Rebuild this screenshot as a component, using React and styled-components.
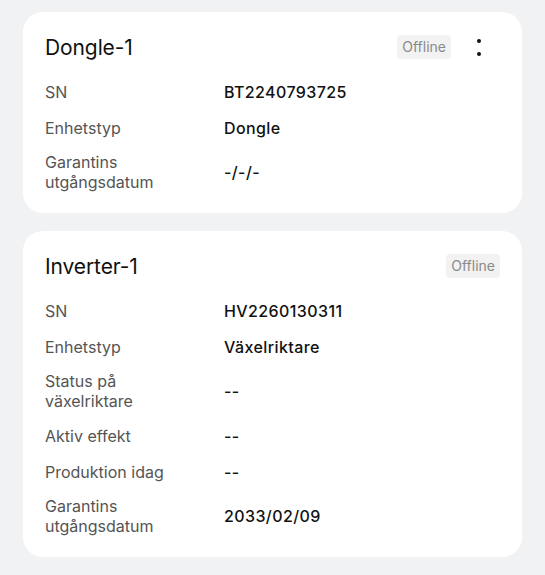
import React from "react";
import styled, { createGlobalStyle } from "styled-components";

const GlobalStyle = createGlobalStyle`
  body {
    margin: 0;
    background: #f1f2f4;
    font-family: Inter, "Noto Sans", sans-serif;
    -webkit-font-smoothing: antialiased;
  }
`;

// kolumn med kort
const Page = styled.div`
  display: flex;
  flex-direction: column;
  gap: 18px;
  padding: 12px 23px 19px 23px;
`;

const Card = styled.div`
  background: #fff;
  border-radius: 20px;
  padding: 22px 22px 21px 22px;
`;

const CardHeader = styled.div`
  display: flex;
  align-items: center;
  height: 26px;
  margin-bottom: 20px;
`;

const Title = styled.h2`
  flex: 1;
  margin: 0;
  font-size: 21px;
  font-weight: 400;
  color: #111;
  letter-spacing: -0.1px;
`;

const Badge = styled.span`
  background: #f2f2f2;
  color: #8a8a8a;
  font-size: 14px;
  line-height: 24px;
  padding: 0 5px;
  border-radius: 4px;
`;

const MoreButton = styled.button`
  border: 0;
  background: none;
  padding: 0;
  margin-left: 20px;
  margin-right: 13px;
  width: 16px;
  height: 26px;
  display: flex;
  align-items: center;
  justify-content: center;
`;

const Rows = styled.div`
  display: flex;
  flex-direction: column;
  gap: 13px;
`;

const Row = styled.div`
  display: grid;
  grid-template-columns: 179px 1fr;
  align-items: center;
  min-height: 23px;
`;

const Label = styled.div`
  font-size: 16px;
  line-height: 20px;
  color: #555;
`;

const Value = styled.div`
  font-size: 16px;
  line-height: 20px;
  font-weight: 500;
  letter-spacing: 0.4px;
  color: #111;
`;

const MoreIcon = () => (
  <svg width="6" height="18" viewBox="0 0 6 18">
    <circle cx="3" cy="3" r="2" fill="#111" />
    <circle cx="3" cy="16" r="2" fill="#111" />
  </svg>
);

const devices = [
  {
    name: "Dongle-1",
    menu: true,
    rows: [
      ["SN", "BT2240793725"],
      ["Enhetstyp", "Dongle"],
      ["Garantins\nutgångsdatum", "-/-/-"],
    ],
  },
  {
    name: "Inverter-1",
    menu: false,
    rows: [
      ["SN", "HV2260130311"],
      ["Enhetstyp", "Växelriktare"],
      ["Status på\nväxelriktare", "--"],
      ["Aktiv effekt", "--"],
      ["Produktion idag", "--"],
      ["Garantins\nutgångsdatum", "2033/02/09"],
    ],
  },
];

const DeviceCard = ({ device }) => (
  <Card>
    <CardHeader>
      <Title>{device.name}</Title>
      <Badge>Offline</Badge>
      {device.menu && (
        <MoreButton>
          <MoreIcon />
        </MoreButton>
      )}
    </CardHeader>
    <Rows>
      {device.rows.map(([label, value]) => (
        <Row key={label}>
          <Label>
            {label.split("\n").map((line) => (
              <div key={line}>{line}</div>
            ))}
          </Label>
          <Value>{value}</Value>
        </Row>
      ))}
    </Rows>
  </Card>
);

const App = () => (
  <>
    <GlobalStyle />
    <Page>
      {devices.map((d) => (
        <DeviceCard key={d.name} device={d} />
      ))}
    </Page>
  </>
);

export default App;
